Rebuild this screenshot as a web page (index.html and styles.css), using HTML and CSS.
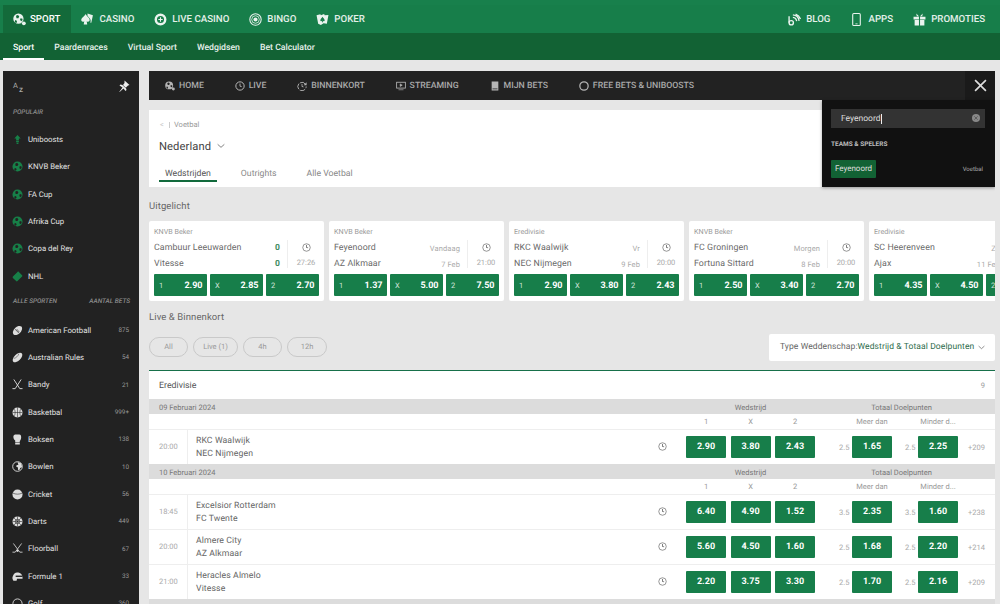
FILE: index.html
```html
<!DOCTYPE html>
<html lang="nl">
<head>
<meta charset="utf-8">
<title>Sport</title>
<link rel="stylesheet" href="styles.css">
</head>
<body>
<svg class="defs" width="0" height="0" aria-hidden="true">
  <symbol id="ball" viewBox="0 0 24 24"><path fill="currentColor" fill-rule="evenodd" d="M12 1a11 11 0 1 0 0 22 11 11 0 0 0 0-22zM7 6l4-2 3 3-2 4H8zM17 11l4 1v4l-3 2-2-3zM6 15l3 1 1 3-2 2-3-2z"/></symbol>
  <symbol id="ball-b" viewBox="0 0 24 24"><path fill="currentColor" fill-rule="evenodd" d="M10 1a9.500 9.500 0 1 0 0 19 9.500 9.500 0 0 0 0-19zM5.500 5l3.500-1.500 2.500 2.500-1.500 3.500H6.500zM14 9.500l3.500 1v3l-2.500 1.500-2-2.500zM4 13l2.500 1 1 2.500-1.500 2-2.500-2z"/><circle cx="20" cy="19" r="3.500" fill="currentColor"/></symbol>
  <symbol id="clock" viewBox="0 0 24 24"><circle cx="12" cy="12" r="10" fill="none" stroke="currentColor" stroke-width="2.400"/><path d="M12 6v6.500l4 1" fill="none" stroke="currentColor" stroke-width="2.200"/></symbol>
  <symbol id="play-clock" viewBox="0 0 24 24"><circle cx="12" cy="12" r="10" fill="none" stroke="currentColor" stroke-width="1.800"/><path d="M11 5.500h2.200v5.500l3.500 1.200-.8 1.900L11 12.500z" fill="currentColor"/></symbol>
  <symbol id="chev" viewBox="0 0 12 8"><path d="M1 1.500l5 4.500 5-4.500" fill="none" stroke="currentColor" stroke-width="1.100"/></symbol>
  <symbol id="casino" viewBox="0 0 24 24"><path fill="currentColor" d="M8.500 2c2.500 5 7.500 7 7.500 11 0 3-3.500 4-5.500 2l1 6H5l1-6c-2 2-5.500 1-5.500-2 0-4 5.500-6 8-11z"/><path fill="currentColor" d="M12 1l10 3-3 14-2-.5c1.500-3 1-6-1.500-8.500L12 5z"/></symbol>
  <symbol id="chip" viewBox="0 0 24 24"><path fill="currentColor" fill-rule="evenodd" d="M12 1a11 11 0 1 0 0 22 11 11 0 0 0 0-22zm0 4.500a6.500 6.500 0 1 1 0 13 6.500 6.500 0 0 1 0-13z"/><path fill="currentColor" d="M11 8h2v3h3v2h-3v3h-2v-3H8v-2h3z"/></symbol>
  <symbol id="bingo" viewBox="0 0 24 24"><circle cx="12" cy="12" r="10.500" fill="none" stroke="currentColor" stroke-width="2"/><circle cx="12" cy="12" r="7" fill="none" stroke="currentColor" stroke-width="1.500"/><circle cx="12" cy="12" r="3.800" fill="currentColor"/></symbol>
  <symbol id="poker" viewBox="0 0 24 24"><path fill="currentColor" fill-rule="evenodd" d="M1 4l7-1.500L9 4l6-2 1 2 7-.5L20 20l-6-1-5 3-5-2zM12 7c-1.500 3-4 4-4 6.500 0 2 2.500 2.500 3.500 1L11 17h2l-.5-2.500c1 1.500 3.500 1 3.500-1C16 11 13.500 10 12 7z"/></symbol>
  <symbol id="rss" viewBox="0 0 24 24"><circle cx="6" cy="18" r="4" fill="none" stroke="currentColor" stroke-width="2.500"/><path d="M2 6v12M9 8a8 8 0 0 1 7 7M9 3.500a13 13 0 0 1 11.500 11M14 2a15 15 0 0 1 9 9" fill="none" stroke="currentColor" stroke-width="2.500"/></symbol>
  <symbol id="phone" viewBox="0 0 24 24"><rect x="5" y="1" width="14" height="22" rx="2" fill="none" stroke="currentColor" stroke-width="2"/><path d="M10 20h4" stroke="currentColor" stroke-width="1.500"/></symbol>
  <symbol id="gift" viewBox="0 0 24 24"><path fill="currentColor" d="M1 7h10v5H1zm12 0h10v5H13zM3 13h8v10H3zm10 0h8v10h-8zM6 1l5 5H7zm12 0l-5 5h4z"/></symbol>
  <symbol id="pin" viewBox="0 0 24 24"><path fill="currentColor" d="M13 1l10 9-3 1-4 4 1 5-2 2-4-5-10 9 8-11-6-4 2-2 5 1 3-4z"/><path d="M2 3l20 19" stroke="#222" stroke-width="1.200"/></symbol>
  <symbol id="screen" viewBox="0 0 24 24"><rect x="1.500" y="3" width="21" height="14" fill="none" stroke="currentColor" stroke-width="2"/><path d="M10 7l5 3-5 3zM6 21h12" fill="currentColor" stroke="currentColor" stroke-width="1.500"/></symbol>
  <symbol id="slip" viewBox="0 0 24 24"><path fill="currentColor" d="M4 1h16v22H4zm2 17v2h12v-2z"/></symbol>
  <symbol id="reload" viewBox="0 0 24 24"><path d="M20.500 8A10 10 0 1 0 22 13" fill="none" stroke="currentColor" stroke-width="2.200" stroke-dasharray="14 3"/><path fill="currentColor" d="M23 3v7h-7zM11 7h2v5l3 2-1 1.500-4-2.500z"/></symbol>
  <symbol id="ring" viewBox="0 0 24 24"><circle cx="12" cy="12" r="10" fill="none" stroke="currentColor" stroke-width="3"/></symbol>
  <symbol id="boost" viewBox="0 0 24 24"><path fill="currentColor" d="M12 2l7 8h-4v4H9v-4H5zM9 15h6v3H9zm1 4h4v3h-4z"/></symbol>
  <symbol id="puck" viewBox="0 0 24 24"><path fill="currentColor" d="M15 2l7 7c1 1 1 2 0 3L12 22c-1 1-2 1-3 0l-7-7c-1-1-1-2 0-3L12 2c1-1 2-1 3 0z"/></symbol>
  <symbol id="football" viewBox="0 0 24 24"><ellipse cx="12" cy="12" rx="12" ry="7.500" transform="rotate(-45 12 12)" fill="currentColor"/><path d="M6 8l10 10M9 12l3-3M11 14l3-3M13 16l3-3" stroke="#222" stroke-width="1.200"/></symbol>
  <symbol id="rugby" viewBox="0 0 24 24"><ellipse cx="12" cy="12" rx="13" ry="7" transform="rotate(-45 12 12)" fill="currentColor"/><path d="M4 14C9 13 13 9 15 4" fill="none" stroke="#222" stroke-width="1"/></symbol>
  <symbol id="sticks" viewBox="0 0 24 24"><path d="M4 1l13 20h6M20 1L7 21H1" fill="none" stroke="currentColor" stroke-width="2"/></symbol>
  <symbol id="basket" viewBox="0 0 24 24"><circle cx="12" cy="12" r="11" fill="currentColor"/><path d="M1 12h22M12 1v22M4 4c4 4 4 12 0 16M20 4c-4 4-4 12 0 16" fill="none" stroke="#222" stroke-width="1.200"/></symbol>
  <symbol id="glove" viewBox="0 0 24 24"><path fill="currentColor" d="M7 1h9c3 0 4 3 4 6s-1 6-3 8v3H7v-4C4 12 3 9 3 6s2-5 4-5zM7 19h10v4H7z"/></symbol>
  <symbol id="globe" viewBox="0 0 24 24"><circle cx="12" cy="12" r="10.500" fill="none" stroke="currentColor" stroke-width="2"/><path fill="currentColor" d="M12 2l8 3 2 8-4 2-2 5-3-1v-5l-4-2 1-3 4-1z"/></symbol>
  <symbol id="cricket" viewBox="0 0 24 24"><circle cx="12" cy="12" r="11" fill="currentColor"/><path d="M2 9c6 3 14 3 20 0" fill="none" stroke="#222" stroke-width="1.200"/></symbol>
  <symbol id="dart" viewBox="0 0 24 24"><circle cx="12" cy="12" r="11" fill="currentColor"/><path d="M12 1v22M1 12h22M4 4l16 16M20 4L4 20" stroke="#222" stroke-width="1.200"/><circle cx="12" cy="12" r="5" fill="none" stroke="#222" stroke-width="1.200"/></symbol>
  <symbol id="floor" viewBox="0 0 24 24"><path d="M3 1l14 19h6M21 1L7 20H1" fill="none" stroke="currentColor" stroke-width="1.800"/><circle cx="12" cy="17" r="2.500" fill="currentColor"/></symbol>
  <symbol id="helmet" viewBox="0 0 24 24"><path fill="currentColor" d="M11 3c7 0 12 4 12 11v3H11l-1 4H3c-2-3-3-6-1-10 1-5 5-8 9-8z"/><path d="M8 10h15v3H8z" fill="#222"/></symbol>
  <symbol id="golf" viewBox="0 0 24 24"><circle cx="12" cy="12" r="10" fill="none" stroke="currentColor" stroke-width="2"/></symbol>
  <symbol id="x" viewBox="0 0 12 12"><path d="M1 1l10 10M11 1L1 11" stroke="currentColor" stroke-width="1.500"/></symbol>
</svg>

<header class="top">
  <nav class="main-nav">
    <a class="main-item active"><svg class="ni"><use href="#ball-b"/></svg>SPORT</a>
    <a class="main-item"><svg class="ni"><use href="#casino"/></svg>CASINO</a>
    <a class="main-item"><svg class="ni"><use href="#chip"/></svg>LIVE CASINO</a>
    <a class="main-item"><svg class="ni"><use href="#bingo"/></svg>BINGO</a>
    <a class="main-item"><svg class="ni"><use href="#poker"/></svg>POKER</a>
    <span class="grow"></span>
    <a class="main-item"><svg class="ni"><use href="#rss"/></svg>BLOG</a>
    <a class="main-item"><svg class="ni"><use href="#phone"/></svg>APPS</a>
    <a class="main-item"><svg class="ni"><use href="#gift"/></svg>PROMOTIES</a>
  </nav>
  <nav class="sub-nav">
    <a class="sub-item active">Sport</a>
    <a class="sub-item">Paardenraces</a>
    <a class="sub-item">Virtual Sport</a>
    <a class="sub-item">Wedgidsen</a>
    <a class="sub-item">Bet Calculator</a>
  </nav>
</header>

<div class="page">
  <aside class="side">
    <div class="side-top"><span class="az">A<small>z</small></span><svg class="pin"><use href="#pin"/></svg></div>
    <div class="side-head">POPULAIR</div>
    <a class="side-row pop"><svg class="si"><use href="#boost"/></svg><span class="sn">Uniboosts</span></a>
    <a class="side-row pop"><svg class="si"><use href="#ball"/></svg><span class="sn">KNVB Beker</span></a>
    <a class="side-row pop"><svg class="si"><use href="#ball"/></svg><span class="sn">FA Cup</span></a>
    <a class="side-row pop"><svg class="si"><use href="#ball"/></svg><span class="sn">Afrika Cup</span></a>
    <a class="side-row pop"><svg class="si"><use href="#ball"/></svg><span class="sn">Copa del Rey</span></a>
    <a class="side-row pop"><svg class="si"><use href="#puck"/></svg><span class="sn">NHL</span></a>
    <div class="side-head two"><span>ALLE SPORTEN</span><span>AANTAL BETS</span></div>
    <a class="side-row"><svg class="si"><use href="#football"/></svg><span class="sn">American Football</span><span class="sc">875</span></a>
    <a class="side-row"><svg class="si"><use href="#rugby"/></svg><span class="sn">Australian Rules</span><span class="sc">54</span></a>
    <a class="side-row"><svg class="si"><use href="#sticks"/></svg><span class="sn">Bandy</span><span class="sc">21</span></a>
    <a class="side-row"><svg class="si"><use href="#basket"/></svg><span class="sn">Basketbal</span><span class="sc">999+</span></a>
    <a class="side-row"><svg class="si"><use href="#glove"/></svg><span class="sn">Boksen</span><span class="sc">138</span></a>
    <a class="side-row"><svg class="si"><use href="#globe"/></svg><span class="sn">Bowlen</span><span class="sc">10</span></a>
    <a class="side-row"><svg class="si"><use href="#cricket"/></svg><span class="sn">Cricket</span><span class="sc">56</span></a>
    <a class="side-row"><svg class="si"><use href="#dart"/></svg><span class="sn">Darts</span><span class="sc">449</span></a>
    <a class="side-row"><svg class="si"><use href="#floor"/></svg><span class="sn">Floorball</span><span class="sc">67</span></a>
    <a class="side-row"><svg class="si"><use href="#helmet"/></svg><span class="sn">Formule 1</span><span class="sc">33</span></a>
    <a class="side-row"><svg class="si"><use href="#golf"/></svg><span class="sn">Golf</span><span class="sc">360</span></a>
  </aside>

  <main class="main">
    <nav class="tool-nav">
      <a class="tool-item"><svg class="ti"><use href="#ball-b"/></svg>HOME</a>
      <a class="tool-item"><svg class="ti"><use href="#clock"/></svg>LIVE</a>
      <a class="tool-item"><svg class="ti"><use href="#reload"/></svg>BINNENKORT</a>
      <a class="tool-item"><svg class="ti"><use href="#screen"/></svg>STREAMING</a>
      <a class="tool-item"><svg class="ti"><use href="#slip"/></svg>MIJN BETS</a>
      <a class="tool-item"><svg class="ti"><use href="#ring"/></svg>FREE BETS &amp; UNIBOOSTS</a>
      <span class="grow"></span>
      <button class="close" aria-label="Sluiten"><svg class="close-x"><use href="#x"/></svg></button>
    </nav>

    <section class="head-card">
      <div class="crumb"><span class="back">&lt;</span><span class="bar"></span>Voetbal</div>
      <h1 class="title">Nederland<svg class="chev-t"><use href="#chev"/></svg></h1>
      <div class="tabs">
        <a class="tab active">Wedstrijden</a>
        <a class="tab">Outrights</a>
        <a class="tab">Alle Voetbal</a>
      </div>
    </section>

    <h2 class="sec first">Uitgelicht</h2>
    <div class="cards">
      <article class="card">
        <div class="league">KNVB Beker</div>
        <div class="match">
          <div class="teams">
            <div class="tline"><span>Cambuur Leeuwarden</span><b class="score">0</b></div>
            <div class="tline"><span>Vitesse</span><b class="score">0</b></div>
          </div>
          <div class="when"><svg class="cl"><use href="#play-clock"/></svg><span>27:26</span></div>
        </div>
        <div class="btns"><a class="btn"><i>1</i><b>2.90</b></a><a class="btn"><i>X</i><b>2.85</b></a><a class="btn"><i>2</i><b>2.70</b></a></div>
      </article>
      <article class="card">
        <div class="league">KNVB Beker</div>
        <div class="match">
          <div class="teams">
            <div class="tline"><span>Feyenoord</span><em>Vandaag</em></div>
            <div class="tline"><span>AZ Alkmaar</span><em>7 Feb</em></div>
          </div>
          <div class="when"><svg class="cl"><use href="#play-clock"/></svg><span>21:00</span></div>
        </div>
        <div class="btns"><a class="btn"><i>1</i><b>1.37</b></a><a class="btn"><i>X</i><b>5.00</b></a><a class="btn"><i>2</i><b>7.50</b></a></div>
      </article>
      <article class="card">
        <div class="league">Eredivisie</div>
        <div class="match">
          <div class="teams">
            <div class="tline"><span>RKC Waalwijk</span><em>Vr</em></div>
            <div class="tline"><span>NEC Nijmegen</span><em>9 Feb</em></div>
          </div>
          <div class="when"><svg class="cl"><use href="#play-clock"/></svg><span>20:00</span></div>
        </div>
        <div class="btns"><a class="btn"><i>1</i><b>2.90</b></a><a class="btn"><i>X</i><b>3.80</b></a><a class="btn"><i>2</i><b>2.43</b></a></div>
      </article>
      <article class="card">
        <div class="league">KNVB Beker</div>
        <div class="match">
          <div class="teams">
            <div class="tline"><span>FC Groningen</span><em>Morgen</em></div>
            <div class="tline"><span>Fortuna Sittard</span><em>8 Feb</em></div>
          </div>
          <div class="when"><svg class="cl"><use href="#play-clock"/></svg><span>20:00</span></div>
        </div>
        <div class="btns"><a class="btn"><i>1</i><b>2.50</b></a><a class="btn"><i>X</i><b>3.40</b></a><a class="btn"><i>2</i><b>2.70</b></a></div>
      </article>
      <article class="card">
        <div class="league">Eredivisie</div>
        <div class="match">
          <div class="teams">
            <div class="tline"><span>SC Heerenveen</span><em>Za</em></div>
            <div class="tline"><span>Ajax</span><em>11 Feb</em></div>
          </div>
          <div class="when"><svg class="cl"><use href="#play-clock"/></svg><span>14:30</span></div>
        </div>
        <div class="btns"><a class="btn"><i>1</i><b>4.35</b></a><a class="btn"><i>X</i><b>4.50</b></a><a class="btn"><i>2</i><b>1.65</b></a></div>
      </article>
    </div>

    <h2 class="sec second">Live &amp; Binnenkort</h2>
    <div class="filters">
      <a class="pill w39">All</a>
      <a class="pill w45">Live (1)</a>
      <a class="pill w39">4h</a>
      <a class="pill w40">12h</a>
      <span class="grow"></span>
      <div class="type"><span>Type Weddenschap:</span><span class="type-val">Wedstrijd &amp; Totaal Doelpunten</span><svg class="chev-s"><use href="#chev"/></svg></div>
    </div>

    <section class="table">
      <div class="tbl-head"><span>Eredivisie</span><span class="count">9</span></div>

      <div class="date-row"><span class="dl">09 Februari 2024</span><span class="c3">Wedstrijd</span><span class="c2">Totaal Doelpunten</span><span class="cm"></span></div>
      <div class="sub-row"><span class="dl"></span><span class="c3 tri"><span>1</span><span>X</span><span>2</span></span><span class="c2 duo"><span>Meer dan</span><span>Minder d...</span></span><span class="cm"></span></div>
      <div class="row"><span class="time">20:00</span><div class="names"><span>RKC Waalwijk</span><span>NEC Nijmegen</span></div><svg class="cl"><use href="#play-clock"/></svg>
        <span class="c3 tri"><a class="odd">2.90</a><a class="odd">3.80</a><a class="odd">2.43</a></span>
        <span class="c2 duo"><span class="tot"><i>2.5</i><a class="odd">1.65</a></span><span class="tot"><i>2.5</i><a class="odd">2.25</a></span></span><span class="cm">+209</span></div>

      <div class="date-row"><span class="dl">10 Februari 2024</span><span class="c3">Wedstrijd</span><span class="c2">Totaal Doelpunten</span><span class="cm"></span></div>
      <div class="sub-row"><span class="dl"></span><span class="c3 tri"><span>1</span><span>X</span><span>2</span></span><span class="c2 duo"><span>Meer dan</span><span>Minder d...</span></span><span class="cm"></span></div>
      <div class="row"><span class="time">18:45</span><div class="names"><span>Excelsior Rotterdam</span><span>FC Twente</span></div><svg class="cl"><use href="#play-clock"/></svg>
        <span class="c3 tri"><a class="odd">6.40</a><a class="odd">4.90</a><a class="odd">1.52</a></span>
        <span class="c2 duo"><span class="tot"><i>3.5</i><a class="odd">2.35</a></span><span class="tot"><i>3.5</i><a class="odd">1.60</a></span></span><span class="cm">+238</span></div>
      <div class="row"><span class="time">20:00</span><div class="names"><span>Almere City</span><span>AZ Alkmaar</span></div><svg class="cl"><use href="#play-clock"/></svg>
        <span class="c3 tri"><a class="odd">5.60</a><a class="odd">4.50</a><a class="odd">1.60</a></span>
        <span class="c2 duo"><span class="tot"><i>2.5</i><a class="odd">1.68</a></span><span class="tot"><i>2.5</i><a class="odd">2.20</a></span></span><span class="cm">+214</span></div>
      <div class="row"><span class="time">21:00</span><div class="names"><span>Heracles Almelo</span><span>Vitesse</span></div><svg class="cl"><use href="#play-clock"/></svg>
        <span class="c3 tri"><a class="odd">2.20</a><a class="odd">3.75</a><a class="odd">3.30</a></span>
        <span class="c2 duo"><span class="tot"><i>2.5</i><a class="odd">1.70</a></span><span class="tot"><i>2.5</i><a class="odd">2.16</a></span></span><span class="cm">+209</span></div>
      <div class="date-row"><span class="dl"></span><span class="c3"></span><span class="c2"></span><span class="cm"></span></div>
    </section>

    <div class="search">
      <div class="search-input"><span class="query">Feyenoord</span><span class="caret"></span><span class="clear"><svg class="clear-x"><use href="#x"/></svg></span></div>
      <div class="search-label">TEAMS &amp; SPELERS</div>
      <div class="search-hit"><a class="hit-btn">Feyenoord</a><span class="hit-sport">Voetbal</span></div>
    </div>
  </main>
</div>
</body>
</html>
```

FILE: styles.css
```css
* { box-sizing: border-box; }
html, body { margin: 0; height: 604px; overflow: hidden; }
body { background: #e6e6e6; font-family: Roboto, "Liberation Sans", sans-serif; color: #555; text-rendering: geometricPrecision; }
a { display: block; }
.defs { position: absolute; }
.grow { flex: 1; }

.top { background: #126234; }
.main-nav { display: flex; height: 33px; padding: 0 5px 0 3px; background: #177e4a; border-top: 5px solid #18804c; }
.main-item { display: flex; align-items: center; gap: 5px; height: 28px; padding: 1px 10px 0; color: #e4f0e9; font-size: 9.700px; font-weight: 500; }
.main-item.active { gap: 4px; padding-right: 11px; background: #136a3a; color: #fff; }
.ni { width: 13px; height: 13px; color: #eaf3ee; }
.sub-nav { display: flex; height: 27px; padding: 0 3px; }
.sub-item { padding: 10px 10px 0; height: 27px; color: #e8f1ec; font-size: 8.700px; font-weight: 500; }
.sub-item.active { color: #fff; border-bottom: 2px solid #fff; }

.page { display: flex; gap: 10px; padding: 11px 5px 0 3px; }
.side { flex: none; width: 136px; height: 533px; overflow: hidden; background: #222; color: #ddd; }
.side-top { display: flex; justify-content: space-between; align-items: center; height: 26px; padding: 3px 9px 0 10px; }
.az { color: #aaa; font-size: 7.500px; line-height: 9px; }
.az small { font-size: 8px; position: relative; top: 4px; margin-left: 1px; font-weight: 500; }
.pin { width: 12px; height: 12px; color: #eee; }
.side-head { display: flex; justify-content: space-between; height: 29px; padding: 11px 9px 0 10px; color: #8d8d8d; font-size: 6.500px; font-style: italic; font-weight: 500; }
.side-head.two { height: 26.500px; padding-top: 7.500px; }
.side-row { display: flex; align-items: center; height: 27.330px; padding: 0 10px 0 9px; }
.si { flex: none; width: 11px; height: 11px; margin-right: 5px; color: #ddd; }
.pop .si { color: #178048; }
.sn { flex: 1; color: #e2e2e2; font-size: 7.800px; }
.sc { color: #999; font-size: 6.300px; }

.main { position: relative; flex: none; width: 846px; height: 533px; overflow: hidden; }
.tool-nav { display: flex; align-items: center; height: 29px; padding-left: 16px; background: #222; }
.tool-item { display: flex; align-items: center; gap: 4px; margin-right: 30.800px; padding-top: 1px; color: #aaa; font-size: 8.750px; font-weight: 500; }
.ti { width: 10px; height: 10px; color: #b5b5b5; }
.close { display: flex; align-items: center; justify-content: center; width: 30px; height: 29px; padding: 0; border: 0; background: #1a1a1a; color: #ddd; }
.close-x { width: 13px; height: 13px; }

.head-card { height: 77px; margin-top: 10px; padding: 9px 10px 0; background: #fff; }
.crumb { display: flex; align-items: center; height: 11px; color: #999; font-size: 7.500px; }
.back { width: 8px; margin-left: 1px; color: #ccc; }
.bar { width: 1px; height: 6px; margin: 0 4px 0 1px; background: #ccc; }
.title { display: flex; align-items: center; height: 16px; margin: 8px 0 0; color: #444; font-size: 11.200px; font-weight: 400; letter-spacing: .1px; }
.chev-t { width: 8px; height: 6px; margin-left: 6px; color: #555; }
.tabs { display: flex; margin-top: 8px; }
.tab { height: 20px; padding: 7px 6px 0; margin-right: 18px; color: #888; font-size: 8.700px; }
.tab.active { color: #555; border-bottom: 2px solid #126a3c; }

.sec { margin: 0; color: #666; font-size: 9.500px; font-weight: 400; letter-spacing: .1px; line-height: 12px; }
.sec.first { margin-top: 14px; }
.sec.second { margin-top: 11px; }
.cards { display: flex; gap: 5px; margin-top: 8px; }
.card { flex: none; width: 175px; height: 80px; padding: 6px 5px 5px; background: #fff; border-radius: 2px; }
.league { height: 10px; color: #999; font-size: 7.200px; line-height: 10px; }
.match { display: flex; height: 35px; margin-top: 2px; }
.teams { flex: 1; padding-right: 7px; padding-top: 1px; }
.tline { display: flex; justify-content: space-between; align-items: center; height: 16px; color: #6a6a6a; font-size: 8.800px; letter-spacing: .1px; }
.tline em { color: #aaa; font-size: 7.500px; font-style: normal; }
.score { color: #3d8a60; font-size: 8.500px; }
.when { flex: none; display: flex; flex-direction: column; align-items: center; width: 37px; height: 28px; margin: 1px -5px 0 0; padding-top: 3px; border-left: 1px solid #eee; color: #aaa; font-size: 7.500px; }
.when span { margin-top: 2.500px; line-height: 15px; }
.cl { flex: none; width: 9px; height: 9px; color: #666; }
.btns { display: flex; gap: 3px; }
.btn { display: flex; justify-content: space-between; align-items: center; width: 53px; height: 22px; padding: 1px 4.500px 0 5px; background: #177e4a; color: #fff; border-radius: 1px; }
.btn i { color: #cfe3d8; font-size: 7.500px; font-style: normal; }
.btn b { font-size: 9px; font-weight: 700; }

.filters { display: flex; align-items: center; margin-top: 4px; height: 38px; }
.pill { height: 20px; margin-right: 5px; border: 1px solid #c9c9c9; border-radius: 10px; color: #999; font-size: 7.500px; line-height: 18px; text-align: center; }
.w39 { width: 39px; }
.w40 { width: 40px; }
.w45 { width: 45px; }
.type { display: flex; align-items: center; height: 27px; width: 226px; padding-left: 11px; background: #fff; border-radius: 2px; color: #666; font-size: 8.500px; letter-spacing: .1px; white-space: nowrap; }
.type-val { color: #2e6b4c; }
.chev-s { width: 7px; height: 5px; margin-left: 4px; color: #555; }

.table { margin-top: 4px; background: #fff; border-top: 1px solid #17704a; font-size: 7.500px; }
.tbl-head { display: flex; justify-content: space-between; align-items: center; height: 28px; padding: 1px 10px 0; color: #555; font-size: 8.800px; }
.count { color: #999; font-size: 7.500px; }
.date-row, .sub-row, .row { display: flex; align-items: center; }
.date-row { height: 15px; padding-top: 1px; background: #dcdcdc; color: #777; }
.sub-row { height: 15px; color: #999; }
.dl { flex: 1; padding-left: 10px; }
.c3 { flex: none; width: 129px; margin-left: 18px; text-align: center; }
.c2 { flex: none; width: 119px; margin-left: 24px; padding-left: 6px; text-align: center; }
.cm { flex: none; width: 37px; padding-right: 10px; color: #aaa; text-align: right; }
.tri { display: flex; justify-content: space-between; }
.tri > span { width: 40px; text-align: center; }
.duo { display: flex; justify-content: space-between; padding-left: 0; }
.duo > span { width: 53px; text-align: right; }
.sub-row .duo > span { padding-left: 13px; text-align: center; }
.row { height: 35px; border-top: 1px solid #eee; }
.time { flex: none; width: 39px; height: 34px; padding-left: 10px; border-right: 1px solid #eee; color: #aaa; line-height: 34px; }
.names { flex: 1; display: flex; flex-direction: column; gap: 2.500px; padding: 1px 0 0 8px; color: #666; font-size: 8.700px; line-height: 10px; letter-spacing: .1px; }
.row .cl { margin: -2px 1.500px 0 0; }
.odd { width: 40px; height: 22px; background: #177e4a; border-radius: 1px; color: #fff; font-size: 9px; font-weight: 700; line-height: 22px; text-align: center; }
.tot { display: flex; justify-content: space-between; align-items: center; }
.tot i { color: #aaa; font-style: normal; }

.search { position: absolute; top: 29px; right: 0; width: 173px; height: 87px; padding: 9px 10px 0 9px; background: #111; box-shadow: 0 1px 3px rgba(0,0,0,.35); }
.search-input { position: relative; display: flex; align-items: center; height: 19px; padding-left: 10px; background: #333; color: #ddd; font-size: 8.500px; }
.caret { width: 1px; height: 10px; background: #eee; }
.clear { position: absolute; right: 5px; top: 4.500px; display: flex; align-items: center; justify-content: center; width: 8px; height: 8px; border-radius: 50%; background: #888; color: #333; }
.clear-x { width: 4px; height: 4px; }
.search-label { margin-top: 12px; color: #bbb; font-size: 6.500px; font-weight: 700; line-height: 9px; }
.search-hit { display: flex; justify-content: space-between; align-items: center; margin-top: 11px; padding-right: 2px; }
.hit-btn { width: 45px; height: 18px; background: #126234; border-radius: 1px; color: #ddd; font-size: 8px; line-height: 18px; text-align: center; }
.hit-sport { color: #aaa; font-size: 6px; }
```
